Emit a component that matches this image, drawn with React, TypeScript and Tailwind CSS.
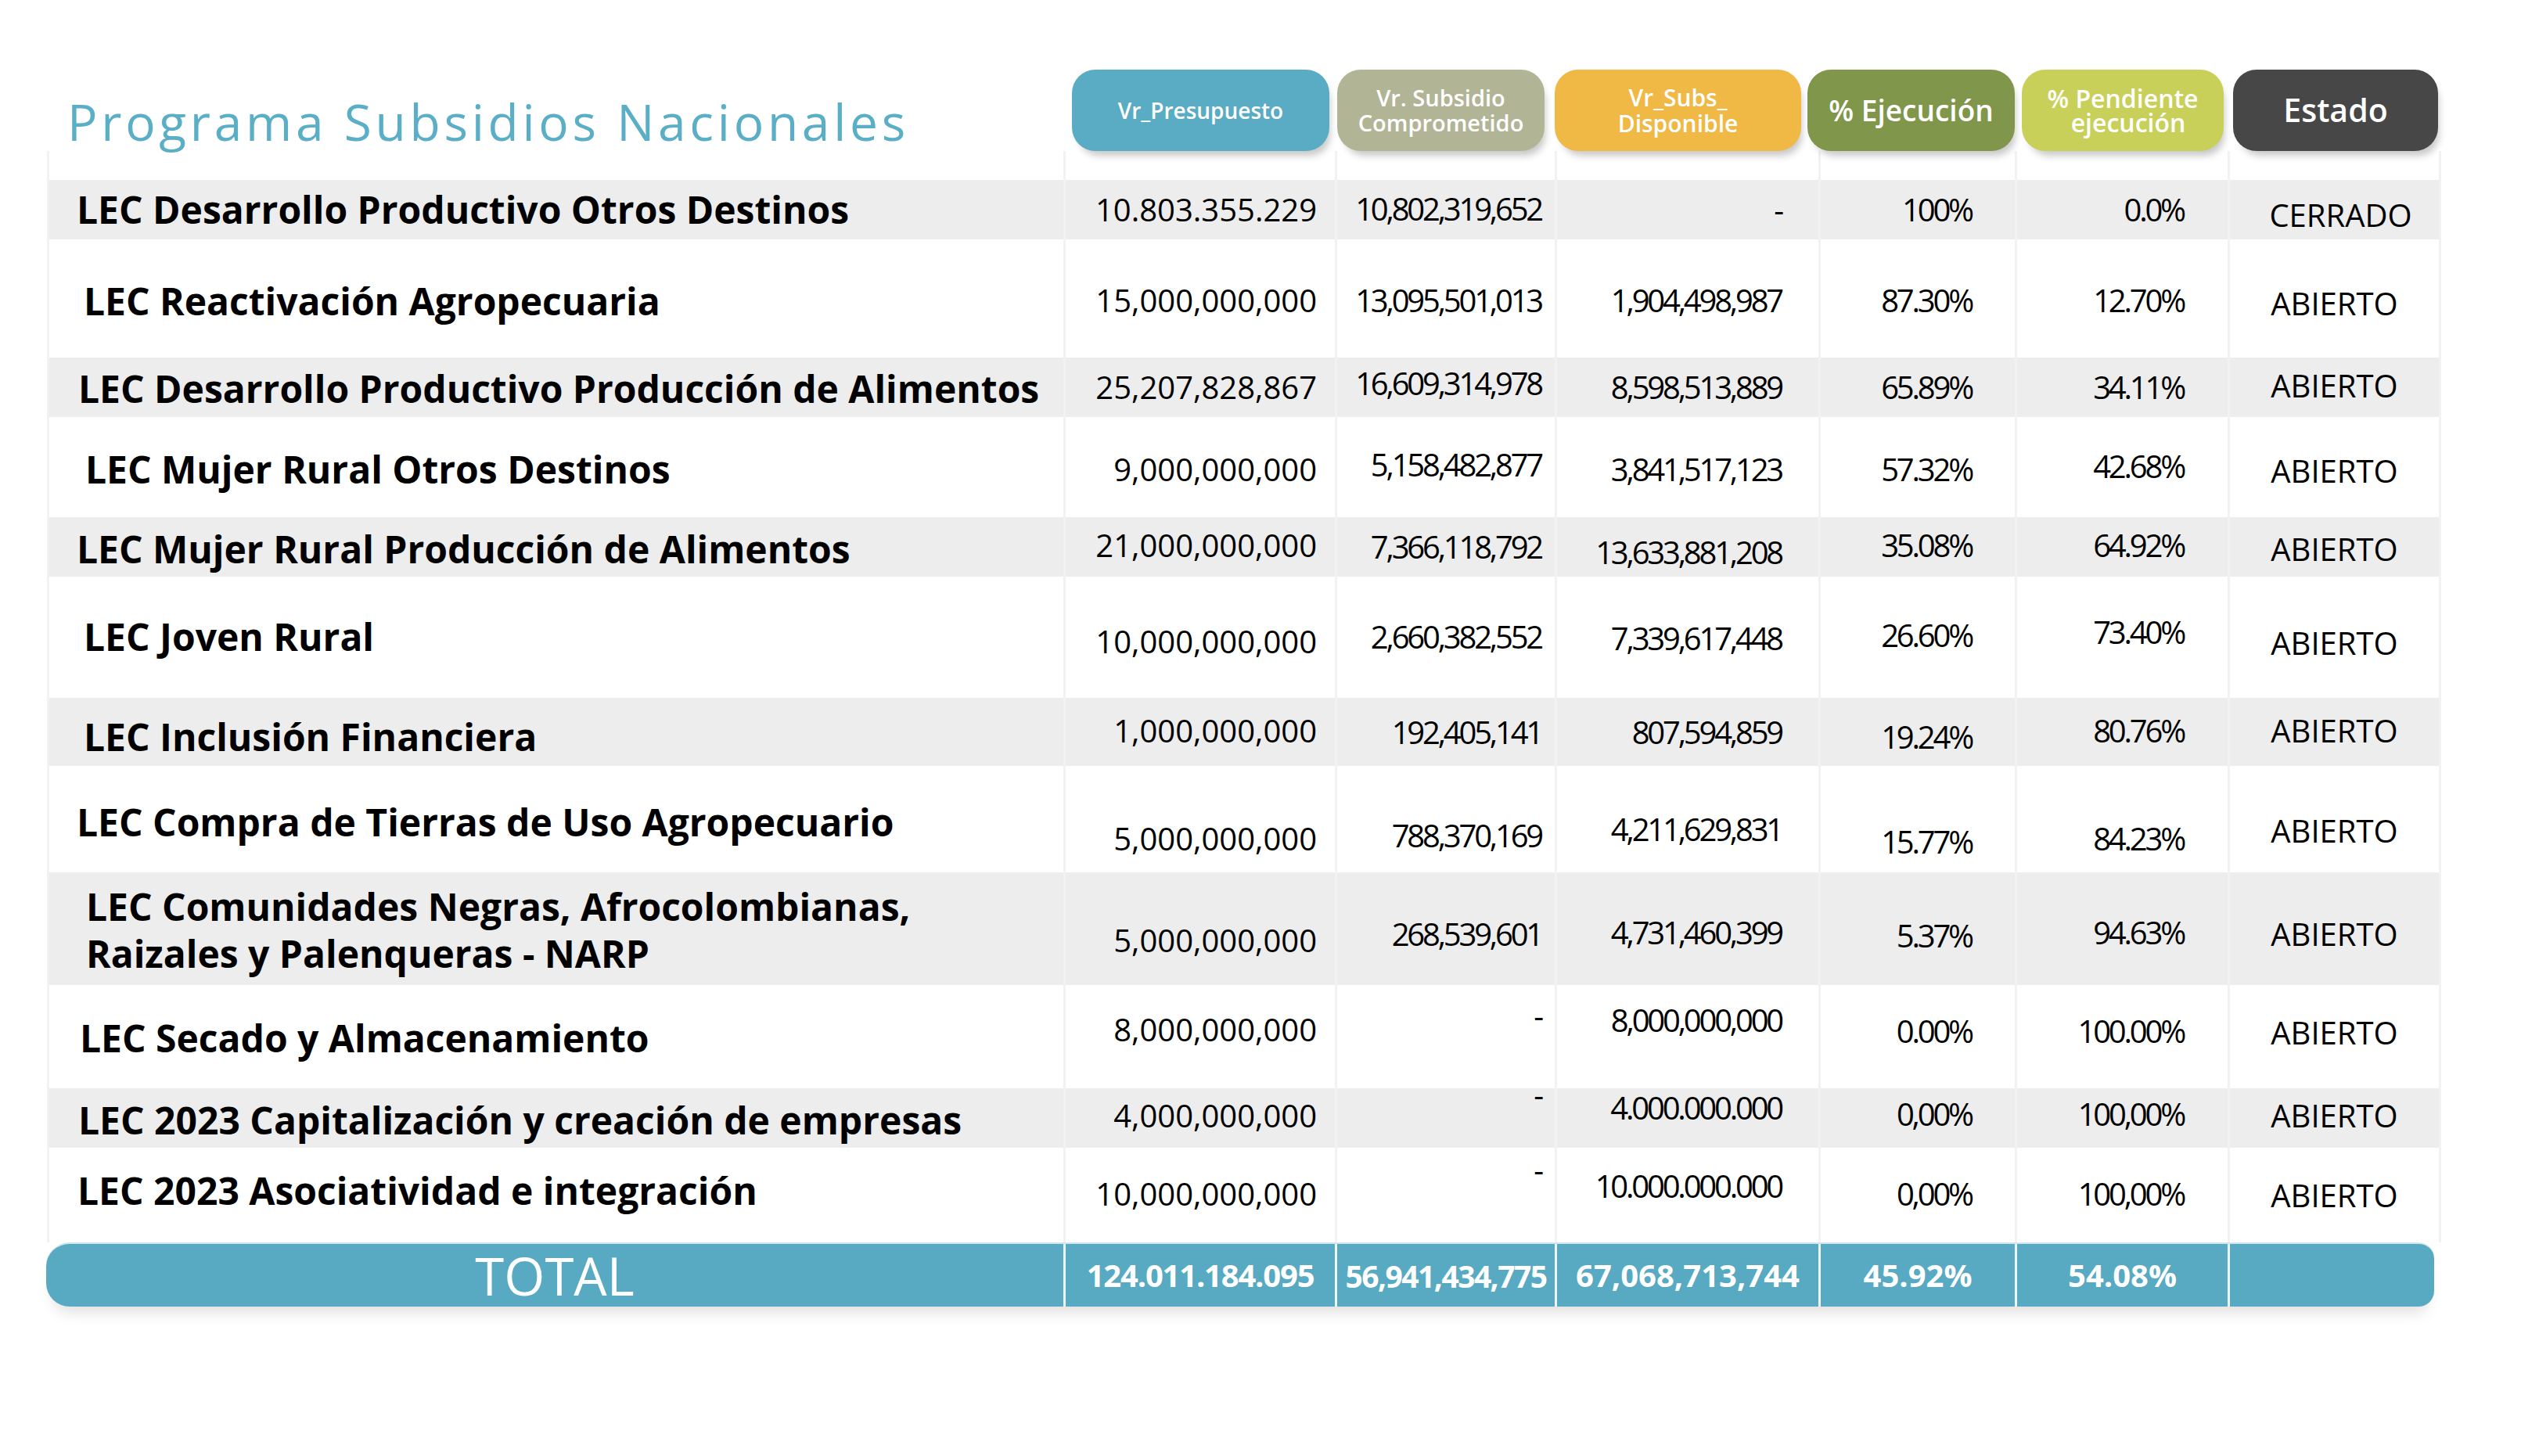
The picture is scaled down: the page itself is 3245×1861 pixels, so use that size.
import React from "react";

type Cell = [string, string];
type Row = {
  label: React.ReactNode;
  h: string;
  gray: boolean;
  pl: string;
  ly: string;
  cells: Cell[];
};

const rows: Row[] = [
  {
    label: "LEC Desarrollo Productivo Otros Destinos",
    h: "h-[76px]",
    gray: true,
    pl: "pl-[35px]",
    ly: "",
    cells: [
      ["10.803.355.229", ""],
      ["10,802,319,652", "-translate-y-[1px]"],
      ["-", ""],
      ["100%", ""],
      ["0.0%", ""],
      ["CERRADO", "translate-y-[7px] translate-x-[8px]"],
    ],
  },
  {
    label: "LEC Reactivación Agropecuaria",
    h: "h-[151px]",
    gray: false,
    pl: "pl-[44px]",
    ly: "translate-y-[3px]",
    cells: [
      ["15,000,000,000", "translate-y-[2px]"],
      ["13,095,501,013", "translate-y-[2px]"],
      ["1,904,498,987", "translate-y-[2px]"],
      ["87.30%", "translate-y-[2px]"],
      ["12.70%", "translate-y-[2px]"],
      ["ABIERTO", "translate-y-[6px]"],
    ],
  },
  {
    label: "LEC Desarrollo Productivo Producción de Alimentos",
    h: "h-[76px]",
    gray: true,
    pl: "pl-[37px]",
    ly: "translate-y-[2px]",
    cells: [
      ["25,207,828,867", ""],
      ["16,609,314,978", "-translate-y-[5px]"],
      ["8,598,513,889", ""],
      ["65.89%", ""],
      ["34.11%", ""],
      ["ABIERTO", "-translate-y-[2px]"],
    ],
  },
  {
    label: "LEC Mujer Rural Otros Destinos",
    h: "h-[128px]",
    gray: false,
    pl: "pl-[46px]",
    ly: "translate-y-[3px]",
    cells: [
      ["9,000,000,000", "translate-y-[3px]"],
      ["5,158,482,877", "-translate-y-[3px]"],
      ["3,841,517,123", "translate-y-[3px]"],
      ["57.32%", "translate-y-[3px]"],
      ["42.68%", "-translate-y-[1px]"],
      ["ABIERTO", "translate-y-[5px]"],
    ],
  },
  {
    label: "LEC Mujer Rural Producción de Alimentos",
    h: "h-[76px]",
    gray: true,
    pl: "pl-[35px]",
    ly: "translate-y-[3px]",
    cells: [
      ["21,000,000,000", "-translate-y-[2px]"],
      ["7,366,118,792", ""],
      ["13,633,881,208", "translate-y-[7px]"],
      ["35.08%", "-translate-y-[2px]"],
      ["64.92%", "-translate-y-[2px]"],
      ["ABIERTO", "translate-y-[3px]"],
    ],
  },
  {
    label: "LEC Joven Rural",
    h: "h-[155px]",
    gray: false,
    pl: "pl-[44px]",
    ly: "-translate-y-[1px]",
    cells: [
      ["10,000,000,000", "translate-y-[5px]"],
      ["2,660,382,552", "-translate-y-[1px]"],
      ["7,339,617,448", "translate-y-[1px]"],
      ["26.60%", "-translate-y-[3px]"],
      ["73.40%", "-translate-y-[7px]"],
      ["ABIERTO", "translate-y-[7px]"],
    ],
  },
  {
    label: "LEC Inclusión Financiera",
    h: "h-[87px]",
    gray: true,
    pl: "pl-[44px]",
    ly: "translate-y-[6px]",
    cells: [
      ["1,000,000,000", "-translate-y-[2px]"],
      ["192,405,141", ""],
      ["807,594,859", ""],
      ["19.24%", "translate-y-[6px]"],
      ["80.76%", "-translate-y-[2px]"],
      ["ABIERTO", "-translate-y-[2px]"],
    ],
  },
  {
    label: "LEC Compra de Tierras de Uso Agropecuario",
    h: "h-[136px]",
    gray: false,
    pl: "pl-[35px]",
    ly: "translate-y-[4px]",
    cells: [
      ["5,000,000,000", "translate-y-[25px]"],
      ["788,370,169", "translate-y-[21px]"],
      ["4,211,629,831", "translate-y-[13px]"],
      ["15.77%", "translate-y-[29px]"],
      ["84.23%", "translate-y-[25px]"],
      ["ABIERTO", "translate-y-[15px]"],
    ],
  },
  {
    label: (
      <>
        LEC Comunidades Negras, Afrocolombianas,
        <br />
        Raizales y Palenqueras - NARP
      </>
    ),
    h: "h-[144px]",
    gray: true,
    pl: "pl-[47px]",
    ly: "translate-y-[2px]",
    cells: [
      ["5,000,000,000", "translate-y-[15px]"],
      ["268,539,601", "translate-y-[7px]"],
      ["4,731,460,399", "translate-y-[5px]"],
      ["5.37%", "translate-y-[9px]"],
      ["94.63%", "translate-y-[5px]"],
      ["ABIERTO", "translate-y-[7px]"],
    ],
  },
  {
    label: "LEC Secado y Almacenamiento",
    h: "h-[132px]",
    gray: false,
    pl: "pl-[39px]",
    ly: "translate-y-[2px]",
    cells: [
      ["8,000,000,000", "-translate-y-[9px]"],
      ["-", "-translate-y-[27px]"],
      ["8,000,000,000", "-translate-y-[21px]"],
      ["0.00%", "-translate-y-[7px]"],
      ["100.00%", "-translate-y-[7px]"],
      ["ABIERTO", "-translate-y-[5px]"],
    ],
  },
  {
    label: "LEC 2023 Capitalización y creación de empresas",
    h: "h-[76px]",
    gray: true,
    pl: "pl-[37px]",
    ly: "translate-y-[3px]",
    cells: [
      ["4,000,000,000", "-translate-y-[3px]"],
      ["-", "-translate-y-[30px]"],
      ["4.000.000.000", "-translate-y-[13px]"],
      ["0,00%", "-translate-y-[5px]"],
      ["100,00%", "-translate-y-[5px]"],
      ["ABIERTO", "-translate-y-[3px]"],
    ],
  },
  {
    label: "LEC 2023 Asociatividad e integración",
    h: "h-[121px]",
    gray: false,
    pl: "pl-[36px]",
    ly: "-translate-y-[6px]",
    cells: [
      ["10,000,000,000", "-translate-y-[2px]"],
      ["-", "-translate-y-[33px]"],
      ["10.000.000.000", "-translate-y-[12px]"],
      ["0,00%", "-translate-y-[2px]"],
      ["100,00%", "-translate-y-[2px]"],
      ["ABIERTO", ""],
    ],
  },
];

const cols = "grid grid-cols-[1302px_347px_281px_337px_251px_272px_270px]";
const line = "border-r-[3px] border-[#f2f2f2]";
const numPad = [
  "pr-[23px]",
  "pr-[17px] tracking-[-0.08em]",
  "pr-[47px] tracking-[-0.08em]",
  "pr-[55px] tracking-[-0.08em]",
  "pr-[56px] tracking-[-0.08em]",
];

const pills: { text: React.ReactNode; cls: string }[] = [
  { text: "Vr_Presupuesto", cls: "w-[329px] bg-[#5aabc4] text-[28px]" },
  {
    text: (
      <>
        Vr. Subsidio
        <br />
        Comprometido
      </>
    ),
    cls: "w-[265px] ml-[10px] bg-[#b1b596] text-[29px] leading-[32px]",
  },
  {
    text: (
      <>
        Vr_Subs_
        <br />
        Disponible
      </>
    ),
    cls: "w-[315px] ml-[13px] bg-[#f0b844] text-[30px] leading-[33px]",
  },
  { text: "% Ejecución", cls: "w-[265px] ml-[8px] bg-[#80964b] text-[37px]" },
  {
    text: (
      <>
        % Pendiente
        <br />
        <span className="pl-[14px]">ejecución</span>
      </>
    ),
    cls: "w-[258px] ml-[9px] bg-[#c8d059] text-[32px] leading-[31px]",
  },
  { text: "Estado", cls: "w-[262px] ml-[12px] bg-[#474747] text-[41px]" },
];

export default function App() {
  return (
    <div className="w-[3245px] h-[1861px] bg-white overflow-hidden font-['Open_Sans','Noto_Sans',sans-serif] text-black">
      <div className="flex pt-[89px]">
        <div className="w-[1370px] pl-[86px]">
          <h1 className="mt-[35px] text-[64px] leading-none font-normal tracking-[0.074em] text-[#5aaec6] whitespace-nowrap">
            Programa Subsidios Nacionales
          </h1>
        </div>
        <div className="flex h-[104px]">
          {pills.map((p, i) => (
            <div
              key={i}
              className={`${p.cls} h-[104px] rounded-[30px] flex items-center justify-center text-center text-white font-semibold shadow-[5px_10px_10px_-4px_rgba(0,0,0,0.22)] relative z-10`}
            >
              <div className="leading-[inherit]">{p.text}</div>
            </div>
          ))}
        </div>
      </div>

      <div className="ml-[60px] w-[3060px]">
        <div className={`${cols} h-[37px]`}>
          <div className={`${line} border-l-[3px]`} />
          <div className={line} />
          <div className={line} />
          <div className={line} />
          <div className={line} />
          <div className={line} />
          <div className={line} />
        </div>

        {rows.map((r, ri) => (
          <div key={ri} className={`${cols} ${r.h} ${r.gray ? "bg-[#ededed]" : "bg-white"}`}>
            <div className={`${line} border-l-[3px] flex items-center ${r.pl}`}>
              <div className={`text-[48px] font-bold leading-[60px] whitespace-nowrap ${r.ly}`}>{r.label}</div>
            </div>
            {r.cells.slice(0, 5).map((c, ci) => (
              <div key={ci} className={`${line} flex items-center justify-end`}>
                <span
                  className={`text-[40px] leading-none whitespace-nowrap ${numPad[ci]} ${c[1]} ${c[0] === "-" && ri > 8 ? "text-[30px]" : ""}`}
                >
                  {c[0]}
                </span>
              </div>
            ))}
            <div className={`${line} flex items-center justify-center`}>
              <span className={`text-[40px] leading-none whitespace-nowrap ${r.cells[5][1]}`}>{r.cells[5][0]}</span>
            </div>
          </div>
        ))}

        <div className="flex h-[82px] -ml-[1px] w-[3052px] bg-[#58a9c2] rounded-l-[30px] rounded-r-[20px] border-t-[2px] border-[#cfe5ec] text-white shadow-[0_16px_20px_-10px_rgba(0,0,0,0.14)]">
          <div className="w-[1303px] border-r-[3px] border-[#eef6f9] flex items-center justify-center">
            <span className="text-[67px] leading-none font-normal">TOTAL</span>
          </div>
          <div className="w-[347px] border-r-[3px] border-[#eef6f9] flex items-center justify-center">
            <span className="text-[40px] leading-none font-bold whitespace-nowrap tracking-[-0.03em]">124.011.184.095</span>
          </div>
          <div className="w-[281px] border-r-[3px] border-[#eef6f9] flex items-center justify-center">
            <span className="text-[39px] leading-none font-bold whitespace-nowrap tracking-[-0.04em]">56,941,434,775</span>
          </div>
          <div className="w-[337px] border-r-[3px] border-[#eef6f9] flex items-center justify-center">
            <span className="text-[40px] leading-none font-bold whitespace-nowrap">67,068,713,744</span>
          </div>
          <div className="w-[251px] border-r-[3px] border-[#eef6f9] flex items-center justify-center">
            <span className="text-[40px] leading-none font-bold whitespace-nowrap">45.92%</span>
          </div>
          <div className="w-[272px] border-r-[3px] border-[#eef6f9] flex items-center justify-center">
            <span className="text-[40px] leading-none font-bold whitespace-nowrap">54.08%</span>
          </div>
          <div className="flex-1" />
        </div>
      </div>
    </div>
  );
}
